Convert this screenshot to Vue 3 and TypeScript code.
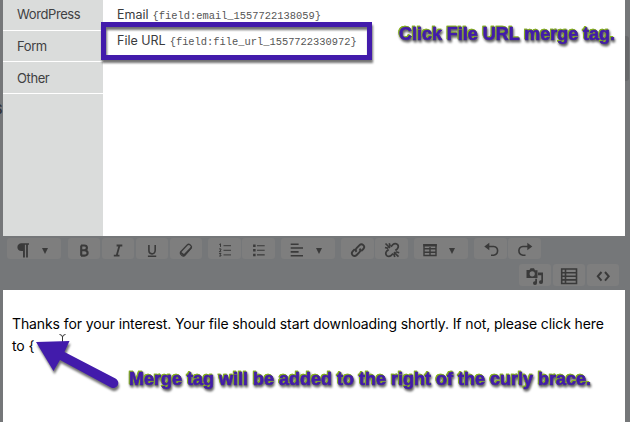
<script setup lang="ts">
interface MergeTag {
  label: string
  code: string
}

interface ToolButton {
  icon: string
  menu?: boolean
}

const categories = ['WordPress', 'Form', 'Other']

const tags: MergeTag[] = [
  { label: 'Email', code: '{field:email_1557722138059}' },
  { label: 'File URL', code: '{field:file_url_1557722330972}' },
]

const groups: ToolButton[][] = [
  [{ icon: 'paragraph', menu: true }],
  [{ icon: 'bold' }, { icon: 'italic' }, { icon: 'underline' }, { icon: 'eraser' }],
  [{ icon: 'ordered' }, { icon: 'unordered' }],
  [{ icon: 'align', menu: true }],
  [{ icon: 'link' }, { icon: 'unlink' }],
  [{ icon: 'table', menu: true }],
  [{ icon: 'undo' }, { icon: 'redo' }],
]

const extras = ['media', 'fields', 'code']

// every icon is drawn on a 20x20 grid, f = filled part, s = stroked part
const icons: Record<string, { f?: string; s?: string; w?: number }> = {
  paragraph: {
    f: 'M8.5 3.3H16v1.500h-1.100V17.500h-1.800V4.800h-1.200V17.500H10V11H8.500C6 11 4.400 9.400 4.400 7.200S6 3.300 8.500 3.300Z',
  },
  bold: { s: 'M7.200 5.500V15.800M7 5.500H10.300C13.800 5.500 13.800 10.200 10.300 10.200H7M10.300 10.200C14.700 10.200 14.700 15.600 10.500 15.600H7', w: 2.1 },
  italic: { s: 'M8.600 5.500H14.300M5.800 15.600H11.500M11.500 5.500L8.700 15.600', w: 1.8 },
  underline: { s: 'M6.900 5V10.300C6.900 15 13.200 15 13.200 10.300V5M5.900 16.300H14.200', w: 1.6 },
  eraser: { f: 'M4.300 13L8 16.500L15.800 8V6L8 14L4.500 11.500Z', s: 'M4.800 11.700L11.200 5Q12.600 3.700 14 4.800L15 5.900Q16 7.100 15 8.300L8.700 15.500Q7.400 16.700 6 15.500L4.900 14.400Q3.900 13 4.800 11.700Z', w: 1.3 },
  ordered: { s: 'M8.500 5.700H16M8.500 10.300H16M8.500 14.900H16M4.300 4.500L5.500 3.800V6.900M4.100 8.900H5.900V10L4.300 11.700H6.200M4.100 13.500H6L5 14.700Q6.200 14.800 6 16H4.100', w: 1 },
  unordered: { f: 'M4.100 4.500h2.500v2.500H4.100zM4.100 9.100h2.500v2.500H4.100zM4.100 13.700h2.500v2.500H4.100z', s: 'M8 5.700H15.700M8 10.300H15.700M8 14.900H15.700', w: 1.1 },
  align: { s: 'M3.700 4.200H11.600M3.700 8H16M3.700 11.900H11.600M3.700 15.700H16', w: 1.6 },
  link: { s: 'M8.500 11.800Q6.900 10 8.600 8.200L11.300 5.300Q13.300 3.300 15.300 5.100Q17.200 7 15.300 9L13.200 11.200M11.600 8.700Q13.200 10.400 11.500 12.200L8.700 15Q6.700 17 4.700 15.200Q2.900 13.300 4.700 11.300L6.800 9.200', w: 1.9 },
  unlink: { s: 'M9 6.700L10.800 4.700Q13 2.800 15.400 4.400Q17.200 6.600 15.300 8.800L13.400 10.500M11 13.500L9.100 15.500Q6.800 17.300 4.700 15.600Q2.900 13.400 4.700 11.200L6.600 9.500M8 8L3.500 3.500M8.300 6.600L7.200 3.300M6.300 8.400L3 7.500M12 12.200L16.500 16.700M11.700 13.500L12.800 17M13.700 11.800L17.200 12.800', w: 1.7 },
  table: { f: 'M3.300 4H16.700V6.500H3.300Z', s: 'M4 4.700H16V15.500H4ZM4 8.800H16M4 12.200H16M10 7V15.500', w: 1.4 },
  undo: { f: 'M3.300 6.500L8.300 2.800V10.200Z', s: 'M7 6.500H12.700Q16.500 7 16.600 10.700Q16.500 14.600 12.700 15.200H10', w: 1.6 },
  redo: { f: 'M17.300 6.500L12.300 2.800V10.200Z', s: 'M13.500 6.500H8Q4 7 3.900 10.700Q4 14.600 7.900 15.200H10.500', w: 1.6 },
  media: { f: 'M1.500 4H4.500L5.500 2.300H9L10 4.200H12.500V12H1.500ZM7.200 5.200A2.600 2.600 0 1 0 7.200 10.400A2.600 2.600 0 1 0 7.200 5.200ZM13 6.500H18V16A2 1.900 0 1 1 16.300 14.200V9.200H13ZM10.200 12.800H12V17A2 1.900 0 1 1 10.200 15.200Z' },
  fields: { s: 'M2.700 3H17.500V17.500H2.700ZM6.500 3V17.500M2.700 6.700H17.500M2.700 10.300H17.500M2.700 13.900H17.500', w: 1.6 },
  code: { s: 'M8.500 6L4.800 10.300L8.500 14.600M12 6L15.700 10.300L12 14.600', w: 2 },
}
</script>

<template>
  <div class="screen">
    <span class="behind">S</span>
    <div class="scroll-thumb"></div>

    <div class="picker">
      <ul class="categories">
        <li v-for="name in categories" :key="name">{{ name }}</li>
      </ul>
      <div class="tags">
        <div v-for="tag in tags" :key="tag.code" class="tag">
          <span>{{ tag.label }}</span>
          <code>{{ tag.code }}</code>
        </div>
      </div>
    </div>

    <div class="toolbar">
      <div class="tool-row">
        <div v-for="(group, i) in groups" :key="i" class="group">
          <button v-for="tool in group" :key="tool.icon" :class="{ menu: tool.menu }">
            <svg class="icon" viewBox="0 0 20 20">
              <path v-if="icons[tool.icon].f" :d="icons[tool.icon].f" fill="currentColor" />
              <path
                v-if="icons[tool.icon].s"
                :d="icons[tool.icon].s"
                fill="none"
                stroke="currentColor"
                :stroke-width="icons[tool.icon].w"
              />
            </svg>
            <i v-if="tool.menu" class="caret"></i>
          </button>
        </div>
      </div>
      <div class="extra-row">
        <button v-for="name in extras" :key="name">
          <svg class="icon" viewBox="0 0 20 20">
            <path v-if="icons[name].f" :d="icons[name].f" fill="currentColor" fill-rule="evenodd" />
            <path
              v-if="icons[name].s"
              :d="icons[name].s"
              fill="none"
              stroke="currentColor"
              :stroke-width="icons[name].w"
            />
          </svg>
        </button>
      </div>
    </div>

    <div class="editor">
      <p>Thanks for your interest. Your file should start downloading shortly. If not, please click here<br />to {</p>
    </div>

    <svg class="notes" viewBox="0 0 630 422">
      <path class="cursor" d="M59.500 334.500Q62 334.500 62.500 337Q63 334.500 65.500 334.500M62.500 337V344" />
      <g class="shape">
        <rect class="frame" x="103.500" y="24.500" width="266" height="33" />
        <path d="M36 342L69.500 341L64.500 352L115.500 378.500A5 5 0 0 1 111 387.500L60 360L53.500 371Z" />
      </g>
      <g class="caption">
        <text x="399" y="40" textLength="216" lengthAdjust="spacingAndGlyphs">Click File URL merge tag.</text>
        <text x="129" y="385" textLength="462" lengthAdjust="spacingAndGlyphs">Merge tag will be added to the right of the curly brace.</text>
      </g>
    </svg>
  </div>
</template>

<style>
body {
  margin: 0;
}
</style>

<style scoped>
.screen {
  position: relative;
  box-sizing: border-box;
  width: 630px;
  height: 422px;
  padding: 0 5px 0 3px;
  overflow: hidden;
  background: #757779;
  font-family: Inter, 'Liberation Sans', sans-serif;
}

.behind {
  position: absolute;
  left: -6px;
  top: 101px;
  font-size: 13px;
  font-weight: 600;
  color: #303238;
}

.scroll-thumb {
  position: absolute;
  left: 622px;
  top: 36px;
  width: 7px;
  height: 45px;
  border-radius: 3px;
  background: #68696b;
}

.picker {
  position: relative;
  display: flex;
  height: 236px;
  background: #fff;
}

.categories {
  width: 100px;
  margin: 0;
  padding: 0;
  list-style: none;
  background: #dadcdb;
  font-size: 13px;
  letter-spacing: -0.4px;
  color: #3f4042;
}

.categories li {
  box-sizing: border-box;
  height: 31px;
  padding-left: 14px;
  border-bottom: 1px solid #fff;
  line-height: 29px;
}

.categories li:nth-child(2) {
  line-height: 31px;
}

.categories li:last-child {
  height: 32px;
  line-height: 33px;
}

.tags {
  padding: 2px 14px;
}

.tag {
  height: 26px;
  line-height: 26px;
  font-size: 12.5px;
  color: #3a3b3d;
  white-space: nowrap;
}

.tag code {
  margin-left: 4px;
  font-family: 'Liberation Mono', monospace;
  font-size: 10.4px;
  color: #555;
}

.toolbar {
  height: 54px;
}

.tool-row {
  display: flex;
  gap: 6px;
  padding: 2px 4px 0;
}

.group {
  display: flex;
  gap: 1px;
}

.group:first-child {
  margin-right: 1px;
}

.group:nth-child(2) {
  gap: 2px;
}

button {
  display: flex;
  align-items: center;
  justify-content: center;
  width: 33px;
  height: 21px;
  padding: 0;
  border: 0;
  border-radius: 3px;
  background: #7e7e7e;
  color: #3a3a3a;
}

.group:nth-child(2) button {
  width: 32px;
}

button.menu {
  width: 54px;
  gap: 9px;
  padding-right: 7px;
}

.icon {
  flex: none;
  width: 20px;
  height: 20px;
  margin-top: 3px;
}

.caret {
  margin-top: 4px;
  border: 3.5px solid transparent;
  border-top: 6px solid #3a3a3a;
  border-bottom: 0;
}

.extra-row {
  display: flex;
  justify-content: flex-end;
  gap: 2px;
  padding: 5px 6px 0;
}

.extra-row button {
  width: 32px;
  height: 22px;
}

.extra-row .icon {
  margin-top: 2px;
}

.editor {
  position: relative;
  height: 132px;
  background: #fff;
}

.editor p {
  margin: 0;
  padding: 23px 0 0 9px;
  font-size: 14px;
  letter-spacing: -0.105px;
  line-height: 22px;
  color: #000;
  white-space: nowrap;
}

/* annotations on top of the page */
.notes {
  position: absolute;
  left: 0;
  top: 0;
  width: 630px;
  height: 422px;
}

.cursor {
  fill: none;
  stroke: #333;
}

.shape {
  fill: #421bab;
  filter: drop-shadow(1px 3px 1px rgba(0, 0, 0, 0.55));
}

.shape .frame {
  fill: none;
  stroke: #421bab;
  stroke-width: 5;
}

.caption {
  font-family: 'Liberation Sans', sans-serif;
  font-size: 18px;
  font-weight: 700;
  fill: #421bab;
  stroke: #421bab;
  stroke-width: 0.7px;
  filter: drop-shadow(-0.6px -0.8px 0 #86b01e) drop-shadow(0.6px 0.2px 0 #86b01e)
    drop-shadow(1px 2.5px 1px rgba(0, 0, 0, 0.6));
}
</style>
